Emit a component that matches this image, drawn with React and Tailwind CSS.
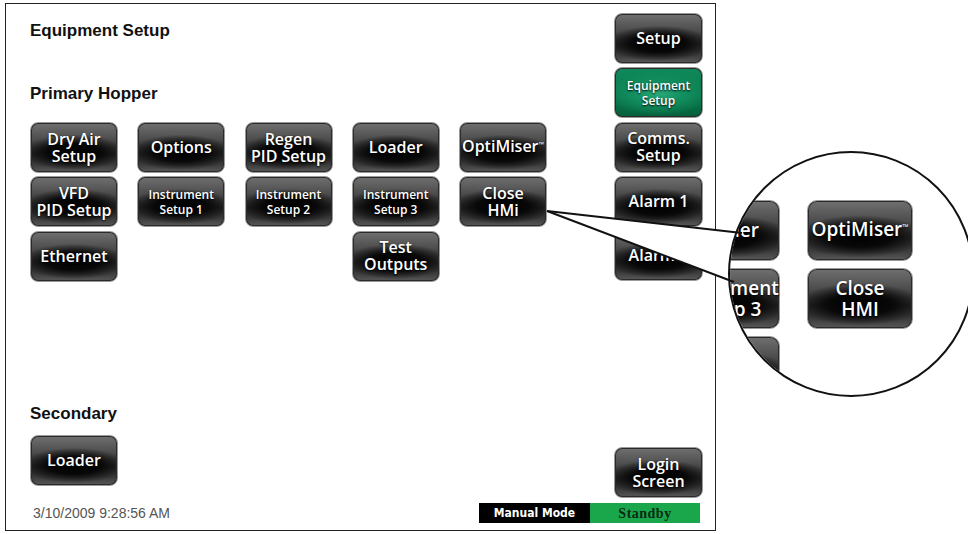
import React from 'react';

const darkBg =
  'bg-[radial-gradient(ellipse_62%_36%_at_50%_60%,#000_0%,#080808_50%,rgba(0,0,0,0)_100%),linear-gradient(#707070,#464646_40%,#2a2a2a_62%,#3c3c3c_85%,#585858)]';
const greenBg =
  'bg-[radial-gradient(ellipse_60%_45%_at_50%_52%,#2aa878_0%,#139060_45%,rgba(0,0,0,0)_100%),linear-gradient(#0f8a5a,#0a7c4f_50%,#05603b)]';

const Btn = ({ children, small, green, big, className = '' }) => (
  <div
    className={`flex flex-col items-center justify-center text-center text-white font-['Open_Sans',sans-serif] font-semibold [text-shadow:0_1px_2px_#000] border border-[#9a9a9a] shadow-[inset_0_0_0_1px_#2a2a2a] ${
      green ? greenBg : darkBg
    } ${
      big
        ? 'w-[106px] h-[61px] rounded-[10px] text-[19px] leading-[21px]'
        : small
        ? 'h-[51px] rounded-[8px] text-[12px] leading-[15px]'
        : 'h-[51px] rounded-[8px] text-[16px] leading-[17px]'
    } ${className}`}
  >
    {children}
  </div>
);

const Col = ({ children }) => <div className="flex flex-col gap-[3.25px]">{children}</div>;

const Tm = ({ big }) => (
  <span className={`relative ${big ? 'text-[8px] -top-[6px]' : 'text-[7px] -top-[5px]'}`}>™</span>
);

export default function App() {
  return (
    <div className="relative w-[968px] h-[534px] overflow-hidden bg-white">
      {/* HMI screen */}
      <div className="ml-[5px] mt-[3px] w-[711px] h-[528px] border border-[#222] flex flex-col">
        <div className="flex justify-between h-[499px]">
          <div className="pl-[24px] flex flex-col">
            <div className="mt-[17px] h-[20px] leading-[20px] text-[17px] font-bold text-[#111] font-['Liberation_Sans',Arial,sans-serif]">
              Equipment Setup
            </div>
            <div className="mt-[43px] h-[20px] leading-[20px] text-[17px] font-bold text-[#111] font-['Liberation_Sans',Arial,sans-serif]">
              Primary Hopper
            </div>
            <div className="mt-[18px] flex gap-[19.25px]">
              <Col>
                <Btn className="w-[88px]">Dry Air<br />Setup</Btn>
                <Btn className="w-[88px]">VFD<br />PID Setup</Btn>
                <Btn className="w-[88px]">Ethernet</Btn>
              </Col>
              <Col>
                <Btn className="w-[88px]">Options</Btn>
                <Btn small className="w-[88px]">Instrument<br />Setup 1</Btn>
              </Col>
              <Col>
                <Btn className="w-[88px]">Regen<br />PID Setup</Btn>
                <Btn small className="w-[88px]">Instrument<br />Setup 2</Btn>
              </Col>
              <Col>
                <Btn className="w-[88px]">Loader</Btn>
                <Btn small className="w-[88px]">Instrument<br />Setup 3</Btn>
                <Btn className="w-[88px]">Test<br />Outputs</Btn>
              </Col>
              <Col>
                <Btn className="w-[88px]">
                  <span>OptiMiser<Tm /></span>
                </Btn>
                <Btn className="w-[88px]">Close<br />HMi</Btn>
              </Col>
            </div>
            <div className="mt-[122px] h-[20px] leading-[20px] text-[17px] font-bold text-[#111] font-['Liberation_Sans',Arial,sans-serif]">
              Secondary
            </div>
            <div className="mt-[11px]">
              <Btn className="w-[88px]">Loader</Btn>
            </div>
          </div>

          <div className="pr-[12px] pt-[9px] pb-[5px] flex flex-col gap-[3.25px]">
            <Btn className="w-[89px]">Setup</Btn>
            <Btn small green className="w-[89px]">Equipment<br />Setup</Btn>
            <Btn className="w-[89px]">Comms.<br />Setup</Btn>
            <Btn className="w-[89px]">Alarm 1</Btn>
            <Btn className="w-[89px]">Alarm 2</Btn>
            <Btn className="w-[89px] mt-auto">Login<br />Screen</Btn>
          </div>
        </div>

        <div className="flex justify-between items-center h-[20px] pl-[27px] pr-[15px]">
          <span className="text-[14px] leading-[16px] text-[#555] font-['Liberation_Sans',Arial,sans-serif]">
            3/10/2009 9:28:56 AM
          </span>
          <div className="flex h-[20px] w-[221px]">
            <div className="w-[111px] bg-black flex items-center justify-center text-white text-[12px] font-bold font-['DejaVu_Sans_Condensed','Liberation_Sans_Narrow',sans-serif]">
              Manual Mode
            </div>
            <div className="w-[110px] bg-[#1aa64b] flex items-center justify-center text-[#082a12] text-[14px] font-bold tracking-[0.5px] font-['Liberation_Serif',serif]">
              Standby
            </div>
          </div>
        </div>
      </div>

      {/* callout wedge */}
      <svg className="absolute left-0 top-0" width="968" height="534">
        <polygon points="547,211 742,233 734,282" fill="#fff" />
      </svg>

      {/* magnifier */}
      <div className="absolute left-[728px] top-[151px] w-[246px] h-[246px] rounded-full border-2 border-[#111] bg-white overflow-hidden">
        <div className="absolute left-[-56px] top-[47px] flex gap-[27px]">
          <div className="flex flex-col gap-[7px]">
            <Btn big>Loader</Btn>
            <Btn big>Instrument<br />Setup 3</Btn>
            <Btn big>Test<br />Outputs</Btn>
          </div>
          <div className="flex flex-col gap-[7px]">
            <Btn big>
              <span>OptiMiser<Tm big /></span>
            </Btn>
            <Btn big>Close<br />HMI</Btn>
          </div>
        </div>
      </div>

      <svg className="absolute left-0 top-0" width="968" height="534">
        <line x1="547" y1="211" x2="742" y2="233" stroke="#111" strokeWidth="2" />
        <line x1="547" y1="211" x2="734" y2="282" stroke="#111" strokeWidth="2" />
      </svg>
    </div>
  );
}
